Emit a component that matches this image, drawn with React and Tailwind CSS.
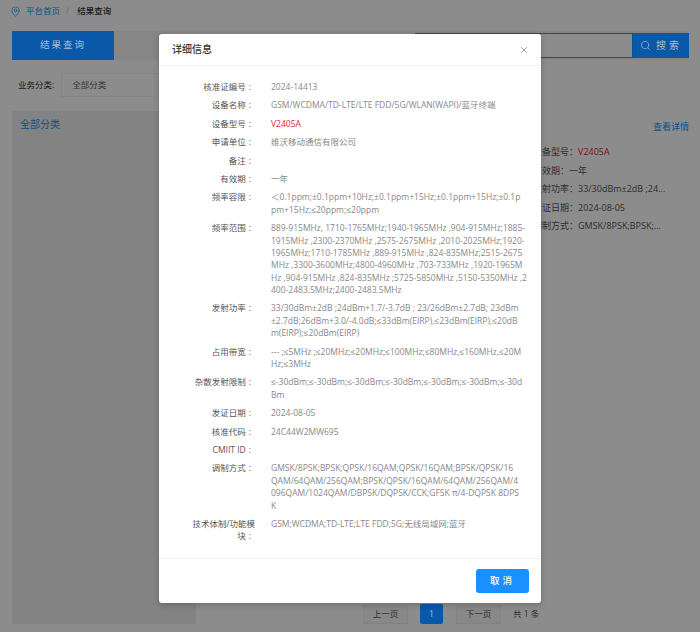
import { MapPin, Search, X } from "lucide-react";

const rows = [
  { label: "核准证编号", lines: ["2024-14413"] },
  { label: "设备名称", lines: ["GSM/WCDMA/TD-LTE/LTE FDD/5G/WLAN(WAPI)/蓝牙终端"] },
  { label: "设备型号", lines: ["V2405A"], red: true },
  { label: "申请单位", lines: ["维沃移动通信有限公司"] },
  { label: "备注", lines: [""] },
  { label: "有效期", lines: ["一年"] },
  {
    label: "频率容限",
    lines: ["＜0.1ppm;±0.1ppm+10Hz;±0.1ppm+15Hz;±0.1ppm+15Hz;±0.1p", "pm+15Hz;≤20ppm;≤20ppm"],
  },
  {
    label: "频率范围",
    lines: [
      "889-915MHz, 1710-1765MHz;1940-1965MHz ,904-915MHz;1885-",
      "1915MHz ,2300-2370MHz ,2575-2675MHz ,2010-2025MHz;1920-",
      "1965MHz;1710-1785MHz ,889-915MHz ,824-835MHz;2515-2675",
      "MHz ,3300-3600MHz;4800-4960MHz ,703-733MHz ,1920-1965M",
      "Hz ,904-915MHz ,824-835MHz ;5725-5850MHz ,5150-5350MHz ,2",
      "400-2483.5MHz;2400-2483.5MHz",
    ],
  },
  {
    label: "发射功率",
    lines: [
      "33/30dBm±2dB ;24dBm+1.7/-3.7dB ; 23/26dBm±2.7dB; 23dBm",
      "±2.7dB;26dBm+3.0/-4.0dB;≤33dBm(EIRP),≤23dBm(EIRP),≤20dB",
      "m(EIRP);≤20dBm(EIRP)",
    ],
  },
  {
    label: "占用带宽",
    lines: ["--- ;≤5MHz ;≤20MHz;≤20MHz;≤100MHz;≤80MHz,≤160MHz,≤20M", "Hz;≤3MHz"],
  },
  {
    label: "杂散发射限制",
    lines: ["≤-30dBm;≤-30dBm;≤-30dBm;≤-30dBm;≤-30dBm;≤-30dBm;≤-30d", "Bm"],
  },
  { label: "发证日期", lines: ["2024-08-05"] },
  { label: "核准代码", lines: ["24C44W2MW695"] },
  { label: "CMIIT ID", lines: [""] },
  {
    label: "调制方式",
    lines: [
      "GMSK/8PSK;BPSK;QPSK/16QAM;QPSK/16QAM;BPSK/QPSK/16",
      "QAM/64QAM/256QAM;BPSK/QPSK/16QAM/64QAM/256QAM/4",
      "096QAM/1024QAM/DBPSK/DQPSK/CCK;GFSK π/4-DQPSK 8DPS",
      "K",
    ],
  },
  { label: ["技术体制/功能模", "块"], lines: ["GSM;WCDMA;TD-LTE;LTE FDD;5G;无线局域网;蓝牙"] },
];

const summary = [
  { label: "设备型号：", value: "V2405A", red: true },
  { label: "有效期：", value: "一年" },
  { label: "发射功率：", value: "33/30dBm±2dB ;24..." },
  { label: "发证日期：", value: "2024-08-05" },
  { label: "调制方式：", value: "GMSK/8PSK;BPSK;..." },
];

const font = "font-['Open_Sans','Noto_Sans_CJK_SC',sans-serif]";

const DetailRow = ({ row }) => {
  const label = Array.isArray(row.label) ? row.label : [row.label];
  return (
    <div className="flex">
      <div className="w-[96px] shrink-0 text-right text-[#555]">
        {label.map((t, i) => (
          <div key={t} className="h-[12.4px]">
            {t}
            {i === label.length - 1 && <span className="ml-[3px] mr-1">:</span>}
          </div>
        ))}
      </div>
      <div className={`ml-4 whitespace-nowrap ${row.red ? "text-[#e8262d]" : "text-[#888]"}`}>
        {row.lines.map((t, i) => (
          <div key={i} className="h-[12.4px]">{t}</div>
        ))}
      </div>
    </div>
  );
};

const App = () => {
  return (
    <div className={`relative h-[632px] w-[700px] overflow-hidden bg-white text-[8.5px] leading-[12.4px] ${font}`}>
      {/* page behind the modal */}
      <div className="flex h-[22px] items-center pl-[10px] text-[#333]">
        <MapPin className="h-[11px] w-[11px] text-[#0a99ff]" strokeWidth={1.5} />
        <span className="ml-[5px] text-[#0a99ff]">平台首页</span>
        <span className="ml-[6px] text-[#ccc]">/</span>
        <span className="ml-2 font-medium">结果查询</span>
      </div>
      <div className="ml-3 mr-[11px] mt-[9px] flex h-[29px] items-center justify-between bg-[#f5f5f5]">
        <div className="relative z-10 flex h-[29px] w-[102px] items-center justify-center bg-[#0a58a8] text-[9.5px] tracking-[2px] text-[#a9bcd0]">
          结果查询
        </div>
        <div className="flex h-[25px] items-center">
          <div className="h-[25px] w-[218px] border border-[#0a99ff] bg-white" />
          <div className="relative z-10 flex h-[25px] w-[56px] items-center justify-center gap-[5px] bg-[#0a58a8] text-[10px] tracking-[3px] text-[#a9bcd0]">
            <Search className="h-[11px] w-[11px]" strokeWidth={1.5} />
            搜索
          </div>
        </div>
      </div>
      <div className="mt-[13px] flex h-[24px] items-center pl-[18px] text-[#333]">
        <span>业务分类:</span>
        <div className="ml-[7px] flex h-[24px] w-[120px] items-center border border-[#f2f2f2] pl-[10px] text-[#666]">
          全部分类
        </div>
      </div>
      <div className="mx-3 mt-[14px] flex h-[513px] gap-[14px]">
        <div className="w-[184px] bg-[#eeeeee] px-2 pt-[7px] text-[10px] text-[#0a99ff]">全部分类</div>
        <div className="flex flex-1 flex-col">
          <div className="-mr-px mt-[10px] text-right text-[9px] text-[#0a99ff]">查看详情</div>
          <div className="mt-[13px] flex flex-col gap-[6px] pl-[323px] whitespace-nowrap text-[9px] text-[#555]">
            {summary.map((s) => (
              <div key={s.label}>
                {s.label}<span className={s.red ? "text-[#e8262d]" : ""}>{s.value}</span>
              </div>
            ))}
          </div>
          <div className="mt-auto flex items-center pl-[153px] text-[#555]">
            <div className="flex h-[19px] w-[45px] items-center justify-center border border-[#eee] bg-[#f7f7f7]">上一页</div>
            <div className="relative z-10 ml-3 flex h-[20px] w-[23px] items-center justify-center rounded-[2px] bg-[#0a58a8] text-[#a9bcd0]">1</div>
            <div className="ml-[13px] flex h-[19px] w-[45px] items-center justify-center border border-[#eee] bg-[#f7f7f7]">下一页</div>
            <span className="ml-3">共 1 条</span>
          </div>
        </div>
      </div>

      {/* modal */}
      <div className="absolute inset-0 flex justify-center bg-black/45 pt-[34px]">
        <div className="relative z-20 flex h-[569px] w-[382px] flex-col rounded-[3px] bg-white shadow-[0_2px_6px_rgba(0,0,0,0.2)]">
          <div className="flex h-[32px] shrink-0 items-center justify-between border-b border-[#f0f0f0] pl-[13px] pr-3">
            <span className="text-[10px] font-medium text-[#333]">详细信息</span>
            <X className="h-[10px] w-[10px] text-[#666]" strokeWidth={1.5} />
          </div>
          <div className="flex flex-1 flex-col gap-[6px] pt-[15px]">
            {rows.map((row, i) => (
              <DetailRow key={i} row={row} />
            ))}
          </div>
          <div className="flex h-[45px] shrink-0 items-center justify-end border-t border-[#f0f0f0] pr-3">
            <button className="h-6 w-[53px] rounded-[3px] bg-[#1890ff] text-[9.5px] font-medium tracking-[3px] text-white">取消</button>
          </div>
        </div>
      </div>
    </div>
  );
};

export default App;
